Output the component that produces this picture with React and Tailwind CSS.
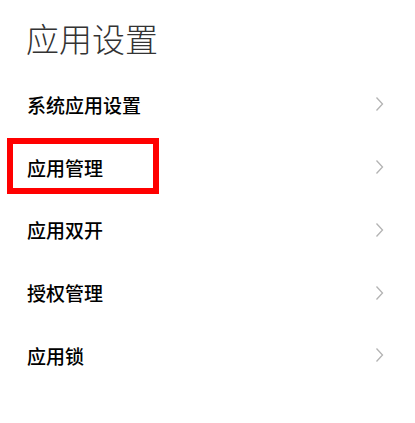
const items = ['系统应用设置', '应用管理', '应用双开', '授权管理', '应用锁'];

function Chevron() {
  return (
    <svg width="9" height="16" viewBox="0 0 9 16" fill="none" className="shrink-0">
      <path d="M1.5 1.5 L7.5 8 L1.5 14.5" stroke="#b3b3b3" strokeWidth="1.3" />
    </svg>
  );
}

export default function App() {
  return (
    <div
      className="relative h-[423px] w-[415px] overflow-hidden bg-white"
      style={{ fontFamily: '"Noto Sans CJK SC", "Noto Sans", sans-serif' }}
    >
      <h1 className="pl-[26px] pt-[18px] text-[33px] font-light leading-[40px] text-[#333]">应用设置</h1>
      <ul className="mt-[15px]">
        {items.map((label, i) => (
          <li key={label} className="relative flex h-[62.75px] items-center justify-between pl-[27px] pr-[31px]">
            <span className="text-[19px] font-medium leading-none text-black">{label}</span>
            <Chevron />
            {i === 1 && (
              <div className="absolute left-[7px] top-[2px] h-[56px] w-[152px] border-[6px] border-[#ff0000]" />
            )}
          </li>
        ))}
      </ul>
    </div>
  );
}
